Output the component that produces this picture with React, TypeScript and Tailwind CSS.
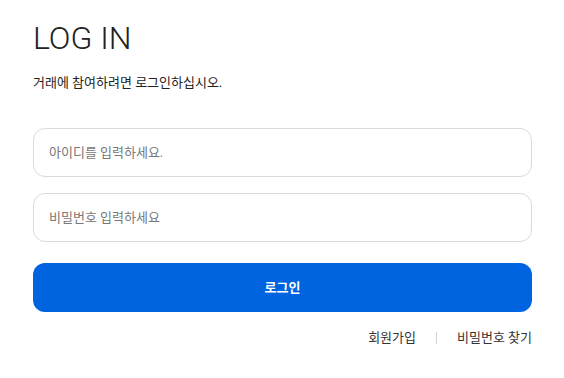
export default function App() {
  const font = { fontFamily: 'Roboto, "Noto Sans CJK KR", sans-serif' };

  return (
    <div className="w-[564px] h-[378px] bg-white pl-[33px] pr-[32px] pt-[16px]" style={font}>
      <h1 className="text-[32px] leading-[44px] text-[#222] font-light">LOG IN</h1>
      <p className="mt-[13px] text-[13px] leading-[20px] text-[#222]">
        거래에 참여하려면 로그인하십시오.
      </p>

      <div className="mt-[35px] flex flex-col gap-[16px]">
        <input
          className="h-[49px] w-full rounded-[12px] border border-[#dadada] px-[15px] text-[13px] text-[#222] placeholder:text-[#777] outline-none"
          placeholder="아이디를 입력하세요."
          style={font}
        />
        <input
          type="password"
          className="h-[49px] w-full rounded-[12px] border border-[#dadada] px-[15px] text-[13px] text-[#222] placeholder:text-[#777] outline-none"
          placeholder="비밀번호 입력하세요"
          style={font}
        />
      </div>

      <button
        className="mt-[21px] h-[49px] w-full rounded-[12px] bg-[#0064e0] text-[13px] font-bold text-white"
        style={font}
      >
        로그인
      </button>

      <div className="mt-[16px] flex items-center justify-end text-[13px] text-[#333]">
        <a href="#">회원가입</a>
        <span className="mx-[20px] h-[12px] w-px bg-[#d5d5d5]" />
        <a href="#">비밀번호 찾기</a>
      </div>
    </div>
  );
}
